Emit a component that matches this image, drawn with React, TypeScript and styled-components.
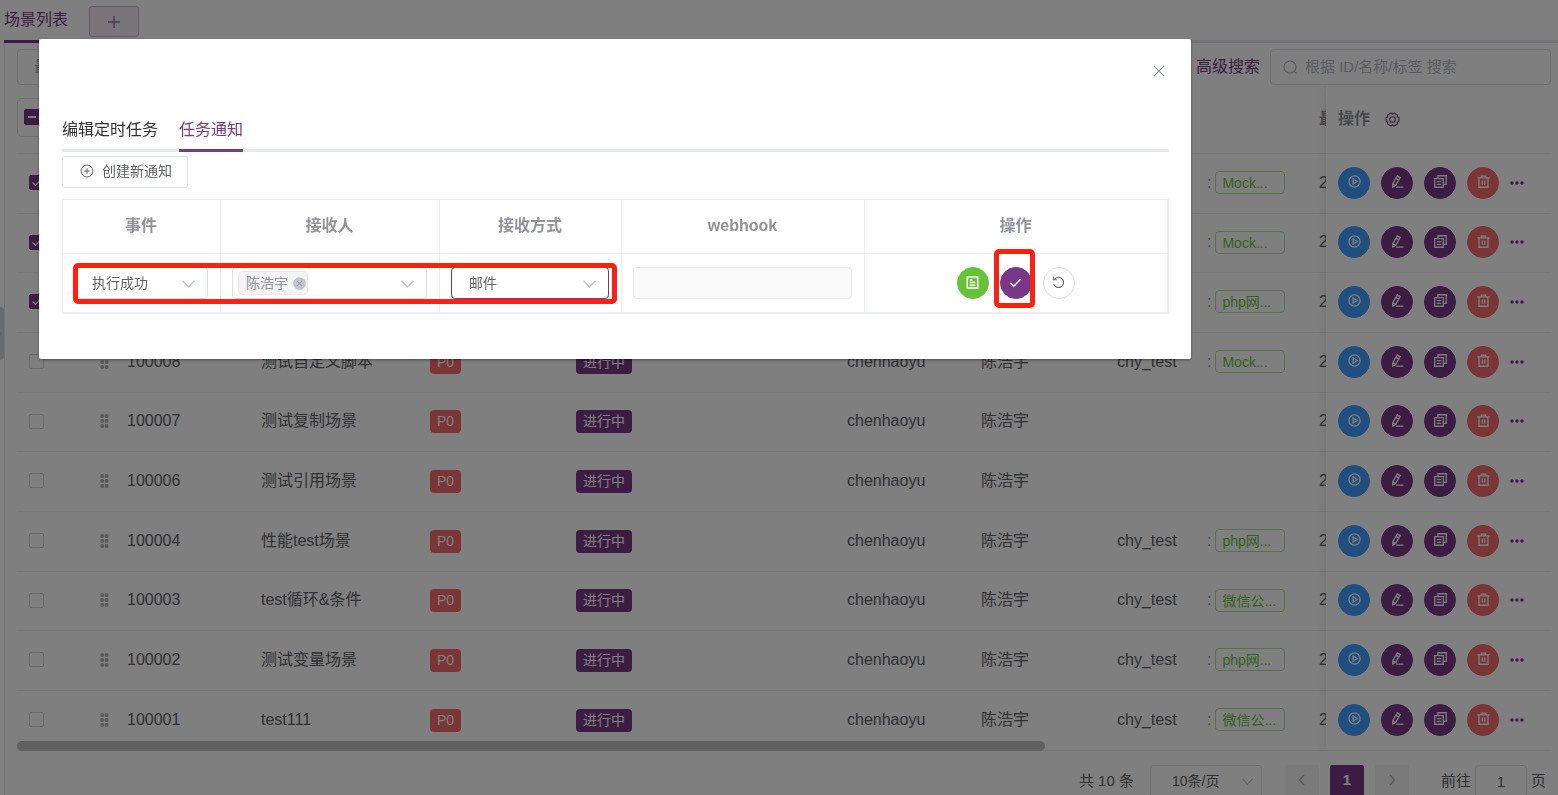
import React from "react";
import styled, { createGlobalStyle, css } from "styled-components";

const PURPLE = "#783887";
const LINE = "#ebeef5";
const BORDER = "#dcdfe6";

const GlobalStyle = createGlobalStyle`
  * { box-sizing: border-box; }
  body {
    margin: 0;
    overflow: hidden;
    background: #fff;
    color: #606266;
    font: 16px/24px "Liberation Sans", "Noto Sans CJK SC", sans-serif;
  }
  button, input, select { font: inherit; color: inherit; margin: 0; padding: 0; }
  button { cursor: pointer; }
  table { border-collapse: separate; border-spacing: 0; table-layout: fixed; }
  th, td { padding: 0; text-align: left; }
`;

/* ---------- page ---------- */

const Page = styled.div`
  display: flex;
  flex-direction: column;
  min-height: 100vh;
  padding-left: 4px;
`;

const PageTabs = styled.nav`
  display: flex;
  align-items: flex-start;
  gap: 21px;
  height: 43px;
  border-bottom: 3px solid #e4e7ed;
`;

const PageTab = styled.a`
  height: 43px;
  padding-top: 8px;
  border-bottom: 3px solid ${PURPLE};
  color: ${PURPLE};
  text-decoration: none;
`;

const AddTab = styled.button`
  display: flex;
  align-items: center;
  justify-content: center;
  width: 50px;
  height: 31px;
  margin-top: 6px;
  border: 1px solid #c9afcf;
  border-radius: 3px;
  background: #f2ebf3;
  color: ${PURPLE};
`;

const Panel = styled.main`
  flex: 1;
  padding: 6px 7px 0 12px;
  border-left: 1px solid #e4e7ed;
`;

const Toolbar = styled.div`
  display: flex;
  align-items: center;
  gap: 10px;
  height: 36px;
`;

const FilterButton = styled.button`
  width: 120px;
  height: 36px;
  margin-right: auto;
  padding-left: 16px;
  border: 1px solid ${BORDER};
  border-radius: 4px;
  background: #fff;
  color: #a8abb2;
  text-align: left;
`;

const AdvancedLink = styled.a`
  color: ${PURPLE};
  text-decoration: none;
`;

const SearchBox = styled.label`
  display: flex;
  align-items: center;
  gap: 7px;
  width: 281px;
  height: 36px;
  padding: 0 12px;
  border: 1px solid ${BORDER};
  border-radius: 4px;
  color: #b4b8c0;
  font-size: 15px;
  input {
    flex: 1;
    min-width: 0;
    border: 0;
    outline: 0;
    background: none;
  }
  input::placeholder { color: #b4b8c0; opacity: 1; }
`;

const TableArea = styled.div`
  position: relative;
  display: flex;
`;

const ScrollPart = styled.div`
  flex: 1;
  min-width: 0;
  overflow: hidden;
`;

const FixedPart = styled.div`
  width: 225px;
  background: #fff;
  box-shadow: 0 0 10px rgba(0, 0, 0, 0.14);
  clip-path: inset(0 0 0 -12px);
`;

const rowSizes = css`
  th { height: 69px; border-bottom: 1px solid ${LINE}; color: #909399; }
  td {
    height: 60px;
    padding-bottom: 2px;
    border-bottom: 1px solid ${LINE};
    white-space: nowrap;
  }
  tbody tr:nth-child(3n + 2) td { height: 59px; }
`;

const SceneTable = styled.table`
  width: 1554px;
  ${rowSizes}
  th:first-child { padding-bottom: 4px; }
`;

const ActionTable = styled.table`
  width: 100%;
  ${rowSizes}
  th, td { padding-left: 12px; }
`;

const Thumb = styled.div`
  position: absolute;
  left: 0;
  bottom: 0;
  width: 67%;
  height: 10px;
  border-radius: 5px;
  background: #c1c1c1;
`;

const CheckInput = styled.input`
  appearance: none;
  display: block;
  width: 15px;
  height: 15px;
  margin-left: 12px;
  border: 1px solid #d0d3da;
  border-radius: 2px;
  background: #fff;
  &:checked {
    border-color: ${PURPLE};
    background: ${PURPLE};
  }
`;

const CheckCell = styled.div`
  position: relative;
  svg {
    position: absolute;
    left: 14px;
    top: 2px;
    color: #fff;
    pointer-events: none;
  }
`;

const SelectAll = styled.div`
  display: flex;
  align-items: center;
  width: 60px;
  height: 39px;
  padding-left: 6px;
  border: 1px solid ${BORDER};
  border-radius: 5px;
`;

const AllInput = styled.input`
  appearance: none;
  width: 16px;
  height: 16px;
  border-radius: 2px;
  background: linear-gradient(#fff, #fff) center / 8px 2px no-repeat ${PURPLE};
`;

const Grip = styled.svg`
  display: block;
  margin-left: 8px;
  color: #b0b0b0;
`;

const Tag = styled.span<{ $kind: "level" | "state" | "env" }>`
  display: inline-block;
  height: 23px;
  padding: 0 7px;
  border-radius: 4px;
  font-size: 14px;
  line-height: 23px;
  color: #fff;
  vertical-align: middle;
  ${(p) => p.$kind === "level" && css`background: #f56c6c;`}
  ${(p) => p.$kind === "state" && css`background: ${PURPLE};`}
  ${(p) =>
    p.$kind === "env" &&
    css`
      width: 70px;
      padding: 0 6px;
      border: 1px solid #b3e19d;
      background: #fff;
      color: #67c23a;
    `}
`;

const EnvCell = styled.div`
  display: flex;
  align-items: center;
  gap: 4px;
  color: #909399;
`;

const Actions = styled.div<{ $center?: boolean }>`
  display: flex;
  align-items: center;
  justify-content: ${(p) => (p.$center ? "center" : "flex-start")};
  gap: 11px;
`;

const tones = {
  blue: ["#409eff", "#fff", "#409eff"],
  purple: [PURPLE, "#fff", PURPLE],
  red: ["#f56c6c", "#fff", "#f56c6c"],
  green: ["#67c23a", "#fff", "#67c23a"],
  plain: ["#fff", "#606266", BORDER],
};

const Round = styled.button<{ $tone: keyof typeof tones }>`
  display: flex;
  align-items: center;
  justify-content: center;
  width: 32px;
  height: 32px;
  padding-bottom: 2px;
  border: 1px solid ${(p) => tones[p.$tone][2]};
  border-radius: 50%;
  background: ${(p) => tones[p.$tone][0]};
  color: ${(p) => tones[p.$tone][1]};
`;

const IconButton = styled.button`
  display: flex;
  border: 0;
  background: none;
  color: ${PURPLE};
`;

const HeadCell = styled.div`
  display: flex;
  align-items: center;
  gap: 15px;
`;

const Pager = styled.div`
  display: flex;
  align-items: center;
  justify-content: flex-end;
  padding: 14px 5px 0 0;
  font-size: 15px;
`;

const PageSize = styled.div`
  position: relative;
  width: 112px;
  margin: 0 23px 0 16px;
  font-size: 14px;
  select {
    appearance: none;
    width: 100%;
    height: 32px;
    padding-left: 21px;
    border: 1px solid ${BORDER};
    border-radius: 3px;
    background: #fff;
  }
  svg { position: absolute; right: 9px; top: 13px; color: #c0c4cc; }
`;

const PageButtons = styled.div`
  display: flex;
  gap: 11px;
  margin-right: 32px;
`;

const PageButton = styled.button<{ $active?: boolean }>`
  display: flex;
  align-items: center;
  justify-content: center;
  width: 34px;
  height: 32px;
  padding-bottom: 2px;
  border: 0;
  border-radius: 2px;
  background: ${(p) => (p.$active ? PURPLE : "#f4f4f5")};
  color: ${(p) => (p.$active ? "#fff" : "#b0b3ba")};
  font-weight: 700;
`;

const Jump = styled.label`
  display: flex;
  align-items: center;
  gap: 4px;
  input {
    width: 52px;
    height: 32px;
    border: 1px solid ${BORDER};
    border-radius: 4px;
    background: #fff;
    text-align: center;
  }
`;

const SideHandle = styled.button`
  position: absolute;
  left: 0;
  top: 307px;
  display: flex;
  align-items: center;
  width: 4px;
  height: 53px;
  border: 0;
  border-radius: 0 4px 4px 0;
  background: #d3d6db;
  color: #8d9096;
  overflow: hidden;
`;

/* ---------- dialog ---------- */

const Mask = styled.div`
  position: fixed;
  inset: 0;
  padding: 39px 367px 0 39px;
  background: rgba(0, 0, 0, 0.5);
`;

const Dialog = styled.section`
  padding: 20px 22px 45px 23px;
  border-radius: 2px;
  background: #fff;
  box-shadow: 0 1px 3px rgba(0, 0, 0, 0.4);
`;

const DialogHead = styled.header`
  display: flex;
  justify-content: flex-end;
  height: 52px;
  padding: 6px 4px 0 0;
`;

const CloseButton = styled.button`
  display: flex;
  height: 12px;
  border: 0;
  background: none;
  color: #909399;
`;

const DialogTabs = styled.div`
  display: flex;
  gap: 21px;
  height: 41px;
  border-bottom: 3px solid #e4e7ed;
`;

const DialogTab = styled.button<{ $active?: boolean }>`
  display: flex;
  height: 41px;
  padding-top: 7px;
  border: 0;
  border-bottom: 3px solid ${(p) => (p.$active ? PURPLE : "transparent")};
  background: none;
  color: ${(p) => (p.$active ? PURPLE : "#303133")};
`;

const CreateButton = styled.button`
  display: flex;
  align-items: center;
  gap: 8px;
  height: 32px;
  margin: 4px 0 11px;
  padding: 0 15px 2px 17px;
  border: 1px solid ${BORDER};
  border-radius: 3px;
  background: #fff;
  font-size: 14px;
`;

const NoticeWrap = styled.div`
  position: relative;
`;

const NoticeTable = styled.table`
  width: 100%;
  border: 1px solid ${LINE};
  th, td {
    padding: 0 12px 0 11px;
    border-right: 1px solid ${LINE};
    border-bottom: 1px solid ${LINE};
    text-align: center;
  }
  th { height: 54px; padding-bottom: 2px; color: #909399; }
  td { height: 59px; font-size: 14px; }
`;

const Picker = styled.div<{ $focus?: boolean }>`
  position: relative;
  display: flex;
  align-items: center;
  height: 32px;
  border: 1px solid ${(p) => (p.$focus ? PURPLE : BORDER)};
  border-radius: 4px;
  select {
    appearance: none;
    width: 100%;
    height: 30px;
    padding-left: 17px;
    border: 0;
    outline: 0;
    background: none;
  }
  input {
    flex: 1;
    min-width: 0;
    border: 0;
    outline: 0;
    background: none;
  }
  > svg {
    position: absolute;
    right: 12px;
    top: 12px;
    color: #c0c4cc;
    pointer-events: none;
  }
`;

const Person = styled.span`
  display: flex;
  align-items: center;
  gap: 5px;
  height: 24px;
  margin-left: 5px;
  padding: 0 1px 0 7px;
  border: 1px solid #e9e9eb;
  border-radius: 4px;
  background: #f4f4f5;
  color: #909399;
`;

const RemoveButton = styled.button`
  display: flex;
  border: 0;
  background: none;
`;

const Webhook = styled.input`
  display: block;
  width: 100%;
  height: 32px;
  border: 1px solid #e4e7ed;
  border-radius: 4px;
  background: #fafafa;
`;

const marker = css`
  position: absolute;
  border: 5px solid #ff2012;
  border-radius: 5px;
  pointer-events: none;
`;

const RowMarker = styled.div`
  ${marker}
  left: 11px;
  top: 64px;
  width: 544px;
  height: 41px;
`;

const Marked = styled.div`
  position: relative;
  &::after {
    ${marker}
    content: "";
    inset: -18px -3px -9px -6px;
  }
`;

/* ---------- icons ---------- */

const Icon = ({ d, size = 14, box = 14, w = 1.2, children }: {
  d?: string; size?: number; box?: number; w?: number; children?: React.ReactNode;
}) => (
  <svg width={size} height={size} viewBox={`0 0 ${box} ${box}`} fill="none" stroke="currentColor" strokeWidth={w} aria-hidden>
    {d && <path d={d} />}
    {children}
  </svg>
);

const Chevron = ({ width = 13 }: { width?: number }) => (
  <svg width={width} height={Math.round(width * 0.6)} viewBox="0 0 13 8" fill="none" stroke="currentColor" strokeWidth="1.4" aria-hidden>
    <path d="M.5 .8 6.5 7l6-6.2" />
  </svg>
);

const PlayIcon = () => (
  <Icon size={13} w={1.4}><circle cx="7" cy="7" r="6" /><path d="M5.500 4.300v5.400L9.900 7z" /></Icon>
);
const EditIcon = () => (
  <Icon size={13} w={1.4} d="M6.800 1 9.900 2.800 5 11.200 1.900 13 1.900 9.400zM5.300 3.600l3.100 1.800M1.900 9.400 5 11.200M5.600 13H13.400" />
);
const CopyIcon = () => (
  <Icon size={13} w={1.4} d="M.8 4h9.200v9.200H.8zM4.200 4V.8h9v9.200H10M3 7.200h4.800M3 10h4.800" />
);
const TrashIcon = () => (
  <Icon size={13} w={1.4} d="M.4 3.200h13.200M4.800 3V1.200h4.400V3M2.200 3.200v10h9.600v-10M5.700 5.800v4.800M8.300 5.800v4.800" />
);
const DocIcon = () => (
  <Icon size={13} w={1.6} d="M1.400 1h11.200v12H1.400zM4 4.300h3M4 7.100h6M4 9.900h6" />
);
const CheckIcon = () => <Icon size={13} w={1.5} d="M1.600 7.600 5.200 11 12.400 3.400" />;
const UndoIcon = () => (
  <Icon size={13} w={1.2} d="M3 3.100A5.500 5.500 0 1 1 1.700 8.400M1.700.8v3.300H5.200" />
);
const MoreIcon = () => (
  <svg width="14" height="4" viewBox="0 0 14 4" fill="currentColor" aria-hidden>
    <circle cx="2" cy="2" r="1.7" /><circle cx="7" cy="2" r="1.7" /><circle cx="12" cy="2" r="1.7" />
  </svg>
);

/* Six flat lobes, one every 60 degrees, around a ring. */
const gearOutline = [0, 60, 120, 180, 240, 300]
  .flatMap((a) => [[a - 17, 6.7], [a + 17, 6.7], [a + 30, 5.3]])
  .map(([a, r]) => {
    const t = (a * Math.PI) / 180;
    return `${(7.5 + r * Math.cos(t)).toFixed(2)},${(7.5 + r * Math.sin(t)).toFixed(2)}`;
  })
  .join(" ");

const GearIcon = () => (
  <Icon size={15} box={15} w={1.1}>
    <polygon points={gearOutline} strokeLinejoin="round" />
    <circle cx="7.500" cy="7.500" r="2.800" />
  </Icon>
);

/* ---------- data ---------- */

type Scene = { id?: string; name?: string; env?: string; checked?: boolean };

const scenes: Scene[] = [
  { env: "Mock...", checked: true },
  { env: "Mock...", checked: true },
  { env: "php网...", checked: true },
  { id: "100008", name: "测试自定义脚本", env: "Mock..." },
  { id: "100007", name: "测试复制场景" },
  { id: "100006", name: "测试引用场景" },
  { id: "100004", name: "性能test场景", env: "php网..." },
  { id: "100003", name: "test循环&条件", env: "微信公..." },
  { id: "100002", name: "测试变量场景", env: "php网..." },
  { id: "100001", name: "test111", env: "微信公..." },
];

const columns = [75, 35, 134, 169, 146, 271, 134, 136, 90, 112, 252];

const SceneRow = ({ scene }: { scene: Scene }) => (
  <tr>
    <td>
      <CheckCell>
        <CheckInput type="checkbox" aria-label="选择" defaultChecked={scene.checked} />
        {scene.checked && <Icon d="M1.500 5.500 4.500 8.300 9.500 3.200" size={11} box={11} />}
      </CheckCell>
    </td>
    <td>
      {scene.id && (
        <Grip width="9" height="16" viewBox="0 0 9 16" fill="currentColor">
          {[3, 8, 13].map((y) => (
            <g key={y}><circle cx="2.200" cy={y} r="2" /><circle cx="6.600" cy={y} r="2" /></g>
          ))}
        </Grip>
      )}
    </td>
    <td>{scene.id}</td>
    <td>{scene.name}</td>
    <td>{scene.id && <Tag $kind="level">P0</Tag>}</td>
    <td>{scene.id && <Tag $kind="state">进行中</Tag>}</td>
    <td>{scene.id && "chenhaoyu"}</td>
    <td>{scene.id && "陈浩宇"}</td>
    <td>{scene.id && scene.env && "chy_test"}</td>
    <td>
      {scene.env && <EnvCell>:<Tag $kind="env">{scene.env}</Tag></EnvCell>}
    </td>
    <td>2</td>
  </tr>
);

const RowActions = () => (
  <Actions>
    <Round $tone="blue" aria-label="执行"><PlayIcon /></Round>
    <Round $tone="purple" aria-label="编辑"><EditIcon /></Round>
    <Round $tone="purple" aria-label="复制"><CopyIcon /></Round>
    <Round $tone="red" aria-label="删除"><TrashIcon /></Round>
    <IconButton aria-label="更多"><MoreIcon /></IconButton>
  </Actions>
);

const ScenePage = () => (
  <Page>
    <PageTabs>
      <PageTab href="#scenes">场景列表</PageTab>
      <AddTab aria-label="新增"><Icon d="M7 1v12M1 7h12" w={1} /></AddTab>
    </PageTabs>
    <Panel>
      <Toolbar>
        <FilterButton>最</FilterButton>
        <AdvancedLink href="#advanced">高级搜索</AdvancedLink>
        <SearchBox>
          <Icon size={15} box={15} w={1.2}><circle cx="7" cy="7" r="6" /><path d="M11.300 11.300 13.500 13.500" /></Icon>
          <input placeholder="根据 ID/名称/标签 搜索" aria-label="搜索" />
        </SearchBox>
      </Toolbar>
      <TableArea>
        <ScrollPart>
          <SceneTable>
            <colgroup>{columns.map((w, i) => <col key={i} width={w} />)}</colgroup>
            <thead>
              <tr>
                <th><SelectAll><AllInput type="checkbox" aria-label="全选" /></SelectAll></th>
                <th colSpan={9} />
                <th>最</th>
              </tr>
            </thead>
            <tbody>{scenes.map((s, i) => <SceneRow key={i} scene={s} />)}</tbody>
          </SceneTable>
        </ScrollPart>
        <FixedPart>
          <ActionTable>
            <thead>
              <tr>
                <th>
                  <HeadCell>
                    操作
                    <IconButton aria-label="设置"><GearIcon /></IconButton>
                  </HeadCell>
                </th>
              </tr>
            </thead>
            <tbody>{scenes.map((_, i) => <tr key={i}><td><RowActions /></td></tr>)}</tbody>
          </ActionTable>
        </FixedPart>
        <Thumb />
      </TableArea>
      <Pager>
        共 10 条
        <PageSize>
          <select aria-label="每页条数"><option>10条/页</option></select>
          <Chevron width={11} />
        </PageSize>
        <PageButtons>
          <PageButton aria-label="上一页"><Icon d="M9 2 4.500 7 9 12" w={1.6} /></PageButton>
          <PageButton $active>1</PageButton>
          <PageButton aria-label="下一页"><Icon d="M5 2 9.500 7 5 12" w={1.6} /></PageButton>
        </PageButtons>
        <Jump>前往<input defaultValue="1" />页</Jump>
      </Pager>
    </Panel>
    <SideHandle aria-label="展开"><Icon d="M-2 1 1.500 4.500M-2 10 1.500 6.500" size={11} box={11} /></SideHandle>
  </Page>
);

const NoticeDialog = () => (
  <Dialog role="dialog" aria-modal="true">
    <DialogHead>
      <CloseButton aria-label="关闭"><Icon d="M.8.8 11.200 11.200M11.200.8.8 11.200" size={12} box={12} w={1.2} /></CloseButton>
    </DialogHead>
    <DialogTabs role="tablist">
      <DialogTab role="tab">编辑定时任务</DialogTab>
      <DialogTab role="tab" $active>任务通知</DialogTab>
    </DialogTabs>
    <CreateButton>
      <Icon w={1}><circle cx="7" cy="7" r="6" /><path d="M7 4.200v5.600M4.200 7h5.600" /></Icon>
      创建新通知
    </CreateButton>
    <NoticeWrap>
      <NoticeTable>
        <colgroup><col width="158" /><col width="219" /><col width="182" /><col width="243" /><col /></colgroup>
        <thead>
          <tr><th>事件</th><th>接收人</th><th>接收方式</th><th>webhook</th><th>操作</th></tr>
        </thead>
        <tbody>
          <tr>
            <td>
              <Picker>
                <select aria-label="事件"><option>执行成功</option></select>
                <Chevron />
              </Picker>
            </td>
            <td>
              <Picker>
                <Person>
                  陈浩宇
                  <RemoveButton aria-label="移除">
                    <svg width="13" height="13" viewBox="0 0 13 13" aria-hidden>
                      <circle cx="6.500" cy="6.500" r="6.300" fill="#c0c4cc" />
                      <path d="M4 4l5 5M9 4 4 9" stroke="#909399" strokeWidth="1" />
                    </svg>
                  </RemoveButton>
                </Person>
                <input aria-label="接收人" />
                <Chevron />
              </Picker>
            </td>
            <td>
              <Picker $focus>
                <select aria-label="接收方式"><option>邮件</option></select>
                <Chevron />
              </Picker>
            </td>
            <td><Webhook disabled aria-label="webhook" /></td>
            <td>
              <Actions $center>
                <Round $tone="green" aria-label="模版"><DocIcon /></Round>
                <Marked><Round $tone="purple" aria-label="保存"><CheckIcon /></Round></Marked>
                <Round $tone="plain" aria-label="撤销"><UndoIcon /></Round>
              </Actions>
            </td>
          </tr>
        </tbody>
      </NoticeTable>
      <RowMarker />
    </NoticeWrap>
  </Dialog>
);

export default function App() {
  return (
    <>
      <GlobalStyle />
      <ScenePage />
      <Mask><NoticeDialog /></Mask>
    </>
  );
}
